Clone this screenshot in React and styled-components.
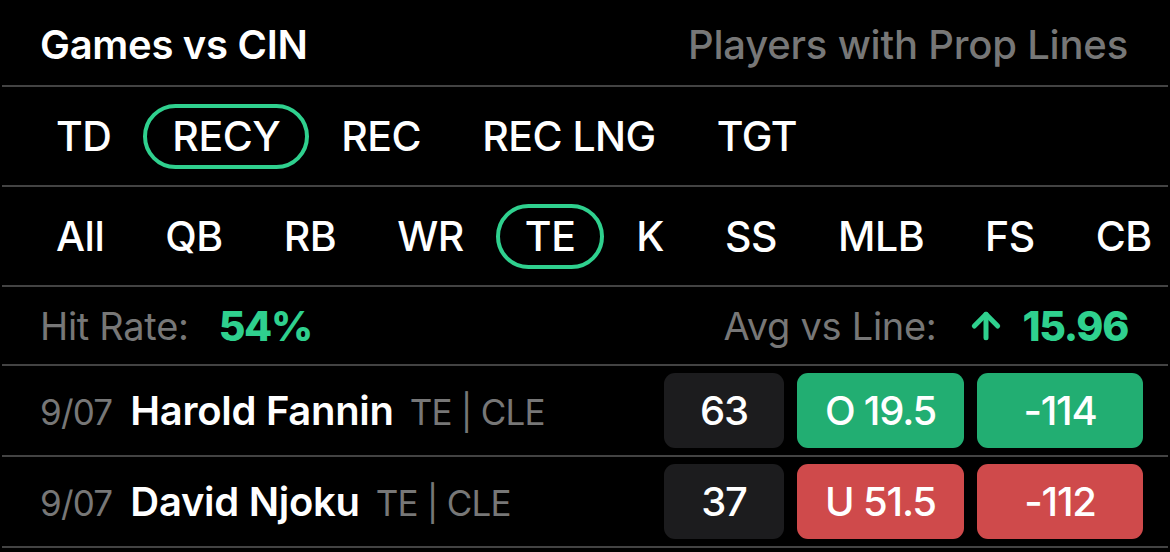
import React from 'react'
import styled, { createGlobalStyle } from 'styled-components';
import { ArrowUp } from 'lucide-react';

const GlobalStyle = createGlobalStyle`
  html, body {
    margin: 0;
    padding: 0;
    background: #000;
  }
  body {
    font-family: Inter, "Noto Sans", sans-serif;
    color: #fff;
  }
`;

const propTabs = ['TD', 'RECY', 'REC', 'REC LNG', 'TGT'];
const positions = ['All', 'QB', 'RB', 'WR', 'TE', 'K', 'SS', 'MLB', 'FS', 'CB'];

const games = [
    { date: '9/07', name: 'Harold Fannin', meta: 'TE | CLE', value: '63', line: 'O 19.5', odds: '-114', hit: true },
    { date: '9/07', name: 'David Njoku', meta: 'TE | CLE', value: '37', line: 'U 51.5', odds: '-112', hit: false },
];

export default function App() {
    return (
        <>
            <GlobalStyle />
            <Page>
                <Header>
                    <Title>Games vs CIN</Title>
                    <SubTitle>Players with Prop Lines</SubTitle>
                </Header>

                <TabRow>
                    {propTabs.map(tab => (
                        <Tab key={tab} active={tab === 'RECY'}>{tab}</Tab>
                    ))}
                </TabRow>

                <TabRow>
                    {positions.map(pos => (
                        <Tab key={pos} active={pos === 'TE'}>{pos}</Tab>
                    ))}
                </TabRow>

                <Stats>
                    <Stat>
                        <Label>Hit Rate:</Label>
                        <Value>54%</Value>
                    </Stat>
                    <Stat>
                        <Label>Avg vs Line:</Label>
                        <Value>
                            <ArrowUp size={40} strokeWidth={3} />
                            15.96
                        </Value>
                    </Stat>
                </Stats>

                {games.map(g => (
                    <GameRow key={g.name}>
                        <Player>
                            <DateText>{g.date}</DateText>
                            <Name>{g.name}</Name>
                            <Meta>{g.meta}</Meta>
                        </Player>
                        <Boxes>
                            <Box kind="dark" width={120}>{g.value}</Box>
                            <Box kind={g.hit ? 'green' : 'red'} width={167}>{g.line}</Box>
                            <Box kind={g.hit ? 'green' : 'red'} width={166}>{g.odds}</Box>
                        </Boxes>
                    </GameRow>
                ))}
            </Page>
        </>
    )
}

const Page = styled.div`
  width: 1170px;
  height: 552px;
  background: #000;
  padding: 0 2px;
  box-sizing: border-box;
  overflow: hidden;
`;

const Section = styled.div`
  border-bottom: 2px solid #434343;
  box-sizing: border-box;
`;

const Header = styled(Section)`
  height: 87px;
  display: flex;
  align-items: center;
  justify-content: space-between;
  padding: 4px 40px 0 38px;
`;

const Title = styled.h1`
  margin: 0;
  font-size: 40px;
  font-weight: 600;
  letter-spacing: -0.3px;
  color: #fff;
`;

const SubTitle = styled.h2`
  margin: 0;
  font-size: 40px;
  font-weight: 500;
  letter-spacing: -0.2px;
  color: #777;
`;

const TabRow = styled(Section)`
  height: 100px;
  display: flex;
  align-items: center;
  gap: ${p => p.gap || 3}px;
  padding-left: 25px;
  overflow: hidden;
  white-space: nowrap;
`;

const Tab = styled.div`
  flex: none;
  height: 65px;
  box-sizing: border-box;
  display: flex;
  align-items: center;
  padding: 0 25px;
  border-radius: 40px;
  border: 4px solid ${p => (p.active ? '#2fd08e' : 'transparent')};
  font-size: 41px;
  font-weight: 500;
  letter-spacing: -0.5px;
  color: #fff;
`;

const Stats = styled(Section)`
  height: 79px;
  display: flex;
  align-items: center;
  justify-content: space-between;
  padding: 0 40px 0 38px;
`;

const Stat = styled.div`
  display: flex;
  align-items: center;
  gap: 30px;
`;

const Label = styled.span`
  font-size: 38px;
  font-weight: 400;
  letter-spacing: -0.3px;
  color: #777;
`;

const Value = styled.span`
  display: flex;
  align-items: center;
  gap: 16px;
  font-size: 41px;
  font-weight: 800;
  letter-spacing: -1.3px;
  color: #2fd08e;
`;

const GameRow = styled(Section)`
  height: 91px;
  display: flex;
  align-items: center;
  justify-content: space-between;
  padding: 0 25px 0 38px;
`;

const Player = styled.div`
  display: flex;
  align-items: baseline;
  white-space: nowrap;
`;

const DateText = styled.span`
  font-size: 35px;
  font-weight: 400;
  letter-spacing: -0.8px;
  color: #777;
  margin-right: 18px;
`;

const Name = styled.span`
  font-size: 40px;
  font-weight: 600;
  letter-spacing: -0.3px;
  color: #fff;
  margin-right: 16px;
`;

const Meta = styled.span`
  font-size: 35px;
  font-weight: 400;
  letter-spacing: -0.8px;
  color: #777;
`;

const Boxes = styled.div`
  display: flex;
  gap: 13px;
`;

const boxColors = {
  dark: '#1c1c1e',
  green: '#22ae72',
  red: '#cf4a4b',
};

const Box = styled.div`
  width: ${p => p.width}px;
  height: 75px;
  border-radius: 11px;
  background: ${p => boxColors[p.kind]};
  display: flex;
  align-items: center;
  justify-content: center;
  font-size: 40px;
  font-weight: 500;
  letter-spacing: -1.2px;
  color: #fff;
`;
